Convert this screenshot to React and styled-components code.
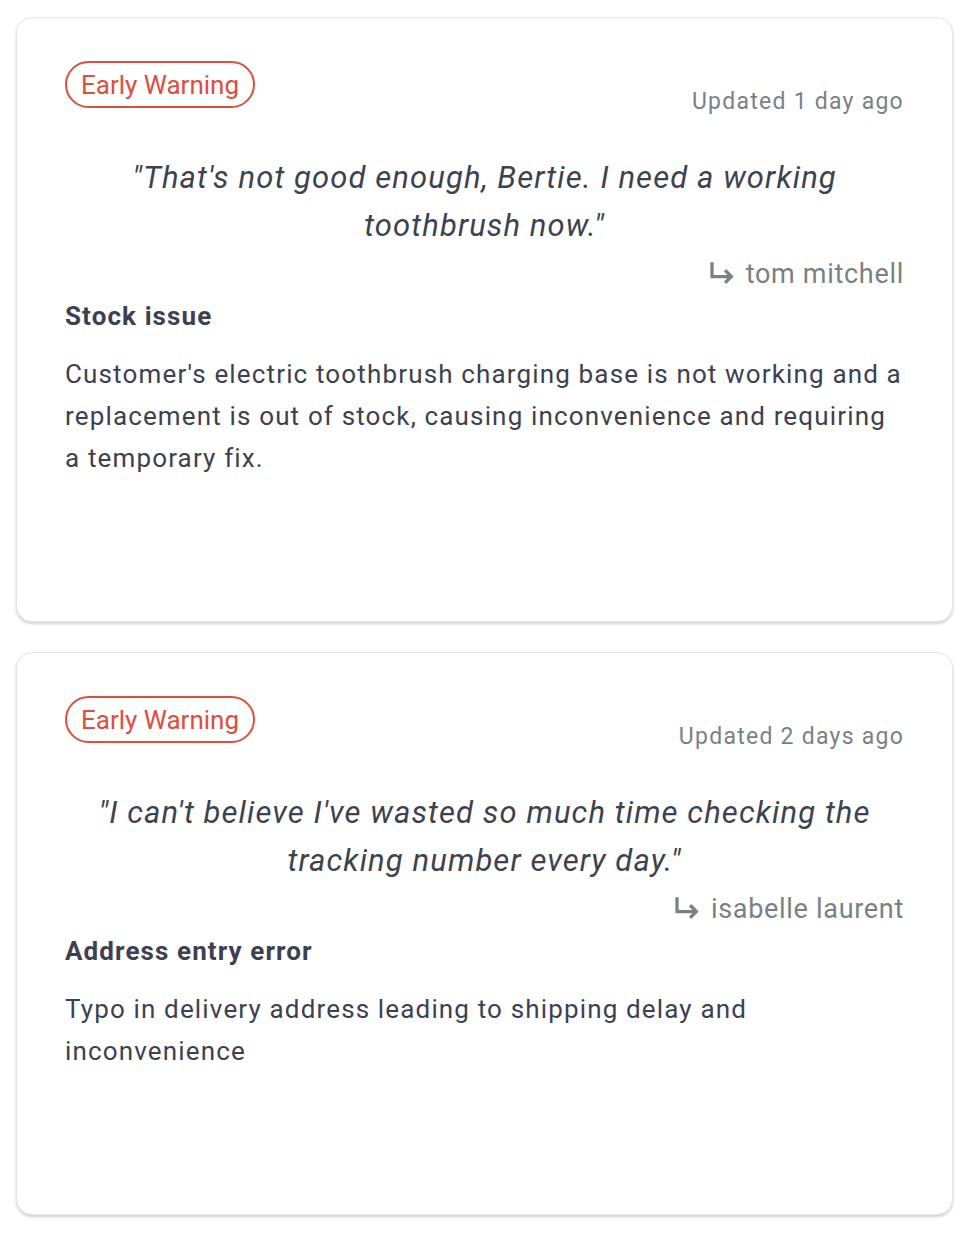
import styled, { createGlobalStyle } from "styled-components";

const GlobalStyle = createGlobalStyle`
  body {
    margin: 0;
    background: #ffffff;
    font-family: Roboto, "Liberation Sans", sans-serif;
  }
`;

const Page = styled.div`
  display: flex;
  flex-direction: column;
  gap: 30px;
  padding: 17px 25px 20px 16px;
`;

const Card = styled.div`
  background: #fff;
  border: 1px solid #e6e6e6;
  border-radius: 16px;
  box-shadow: 0 2px 3px rgba(0, 0, 0, 0.18);
  padding: 43px 48px 142px 48px;
`;

const TopRow = styled.div`
  display: flex;
  justify-content: space-between;
  align-items: flex-end;
`;

const Badge = styled.span`
  display: inline-flex;
  align-items: center;
  height: 43px;
  padding: 0 14px;
  border: 2px solid #e24c3b;
  border-radius: 24px;
  color: #e24c3b;
  font-size: 26px;
`;

const Updated = styled.span`
  color: #7b7f86;
  font-size: 23px;
  letter-spacing: 1.25px;
  margin-bottom: -7px;
`;

const Quote = styled.p`
  margin: 46px 0 0;
  text-align: center;
  font-style: italic;
  font-size: 31px;
  line-height: 48px;
  letter-spacing: 1.1px;
  color: #3e4150;
  padding: 0 20px;
`;

const Author = styled.div`
  display: flex;
  justify-content: flex-end;
  align-items: center;
  gap: 9px;
  color: #7b7f86;
  font-size: 27px;
  line-height: 36px;
  letter-spacing: 0.7px;
  margin-top: 6px;
`;

const Title = styled.h3`
  margin: 6px 0 0;
  font-size: 26px;
  font-weight: 700;
  line-height: 36px;
  letter-spacing: 1.1px;
  color: #3d3f52;
`;

const Description = styled.p`
  margin: 19px 0 0;
  font-size: 26px;
  line-height: 42px;
  letter-spacing: 1.15px;
  color: #3d3f52;
`;

const ReplyArrow = () => (
  <svg width="30" height="30" viewBox="0 0 24 24" fill="none" stroke="#7b7f86" strokeWidth="2.6" strokeLinecap="butt" strokeLinejoin="miter">
    <path d="M4 2.5v11.5h15.5" />
    <path d="M14.5 9 19.5 14l-5 5" />
  </svg>
);

const items = [
  {
    updated: "Updated 1 day ago",
    quote: "\"That's not good enough, Bertie. I need a working toothbrush now.\"",
    author: "tom mitchell",
    title: "Stock issue",
    description:
      "Customer's electric toothbrush charging base is not working and a replacement is out of stock, causing inconvenience and requiring a temporary fix.",
  },
  {
    updated: "Updated 2 days ago",
    quote: "\"I can't believe I've wasted so much time checking the tracking number every day.\"",
    author: "isabelle laurent",
    title: "Address entry error",
    description: "Typo in delivery address leading to shipping delay and inconvenience",
  },
];

const App = () => (
  <>
    <GlobalStyle />
    <Page>
      {items.map((item) => (
        <Card key={item.author}>
          <TopRow>
            <Badge>Early Warning</Badge>
            <Updated>{item.updated}</Updated>
          </TopRow>
          <Quote>{item.quote}</Quote>
          <Author>
            <ReplyArrow />
            {item.author}
          </Author>
          <Title>{item.title}</Title>
          <Description>{item.description}</Description>
        </Card>
      ))}
    </Page>
  </>
);

export default App;
